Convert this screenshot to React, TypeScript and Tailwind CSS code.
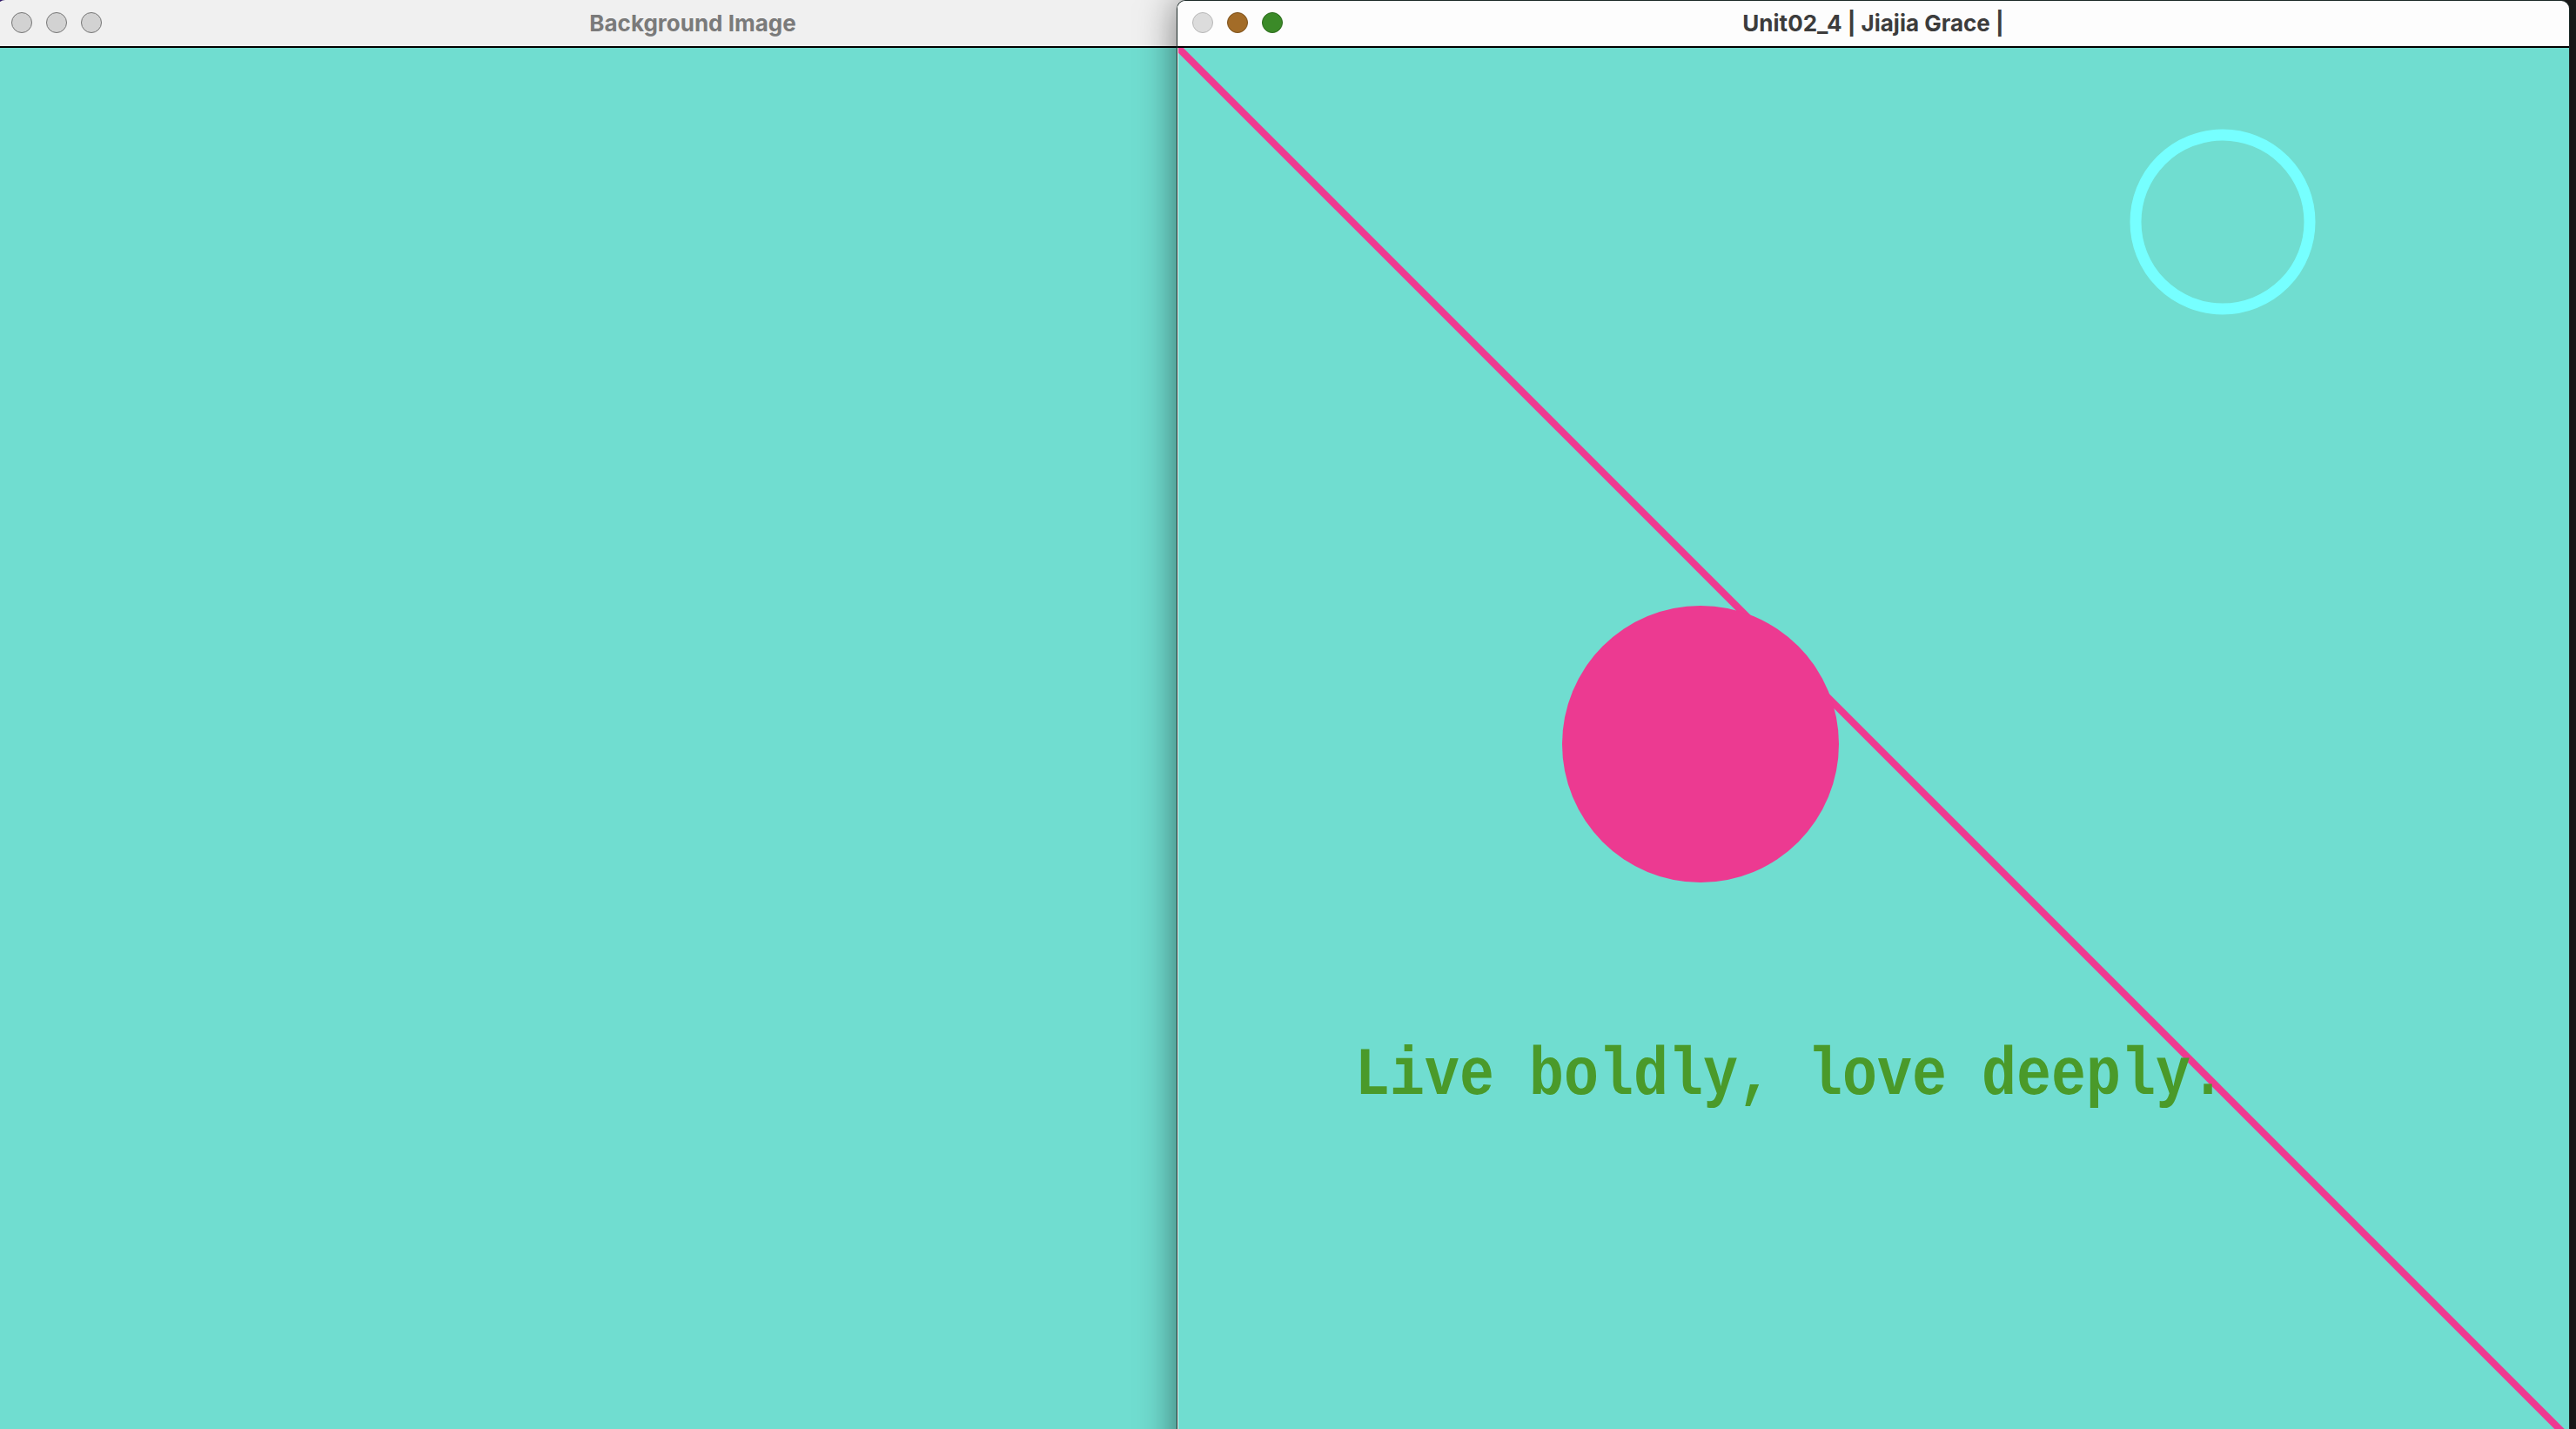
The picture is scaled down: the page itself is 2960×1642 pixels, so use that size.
import React from "react";

type Light = { fill: string; ring: string };

const TrafficLights: React.FC<{ lights: Light[] }> = ({ lights }) => (
  <div className="flex items-center gap-[16px]">
    {lights.map((l, i) => (
      <span
        key={i}
        className={`block w-[24px] h-[24px] rounded-full border-[1.5px] ${l.fill} ${l.ring}`}
      />
    ))}
  </div>
);

const TEAL = "#70ddd0";

// p5 sketch drawn at 2x
const Sketch: React.FC = () => (
  <svg width="1598" height="1600" viewBox="0 0 1598 1600" className="block">
    <rect width="1598" height="1600" fill={TEAL} />
    <line x1="0" y1="0" x2="1600" y2="1600" stroke="#ee3a91" strokeWidth="8" />
    <circle cx="1200" cy="200" r="100" fill="none" stroke="#76ffff" strokeWidth="13" />
    <circle cx="600" cy="800" r="159" fill="#ec3a91" />
    <text
      x="203"
      y="1202"
      fontFamily="'Liberation Mono', 'Courier New', monospace"
      fontWeight="700"
      fontSize="78"
      fill="#4a9a2a"
      textLength="1000"
      lengthAdjust="spacingAndGlyphs"
    >
      Live boldly, love deeply.
    </text>
  </svg>
);

export default function App() {
  return (
    <div className="relative w-[2960px] h-[1642px] overflow-hidden bg-[linear-gradient(to_right,#2e1766_0,#2e1766_40%,#1e1e1e_60%)] font-['Inter','Noto_Sans',sans-serif]">
      {/* back window */}
      <div className="absolute left-[-4px] top-0 w-[1600px] h-[1700px] flex flex-col rounded-t-[10px] overflow-hidden">
        <div className="relative h-[55px] bg-[#f0f0f0] flex items-center justify-center border-b-2 border-black">
          <div className="absolute left-[17px] top-[14px]">
            <TrafficLights
              lights={[
                { fill: "bg-[#d2d2d2]", ring: "border-[#767676]" },
                { fill: "bg-[#d2d2d2]", ring: "border-[#767676]" },
                { fill: "bg-[#d2d2d2]", ring: "border-[#767676]" },
              ]}
            />
          </div>
          <span className="text-[26px] font-bold text-[#7a7a7a] leading-none">
            Background Image
          </span>
        </div>
        <div className="flex-1 bg-[#70ddd0]" />
      </div>

      {/* front window */}
      <div className="absolute left-[1352px] top-0 w-[1601px] h-[1700px] flex flex-col rounded-t-[10px] overflow-hidden border-x border-t border-[#1c2a28] shadow-[0_0_44px_rgba(0,0,0,0.5)]">
        <div className="relative h-[54px] bg-[#fdfdfd] flex items-center justify-center border-b-2 border-black">
          <div className="absolute left-[17px] top-[13px]">
            <TrafficLights
              lights={[
                { fill: "bg-[#dcdcdc]", ring: "border-[#b8b8b8]" },
                { fill: "bg-[#a36c28]", ring: "border-[#7c511c]" },
                { fill: "bg-[#3b8a28]", ring: "border-[#2b6a1c]" },
              ]}
            />
          </div>
          <span className="text-[26px] font-bold text-[#3c3c3c] leading-none">
            Unit02_4 | Jiajia Grace |
          </span>
        </div>
        <div className="flex-1 border-l border-white/90 bg-[#70ddd0] overflow-hidden">
          <Sketch />
        </div>
      </div>
    </div>
  );
}
